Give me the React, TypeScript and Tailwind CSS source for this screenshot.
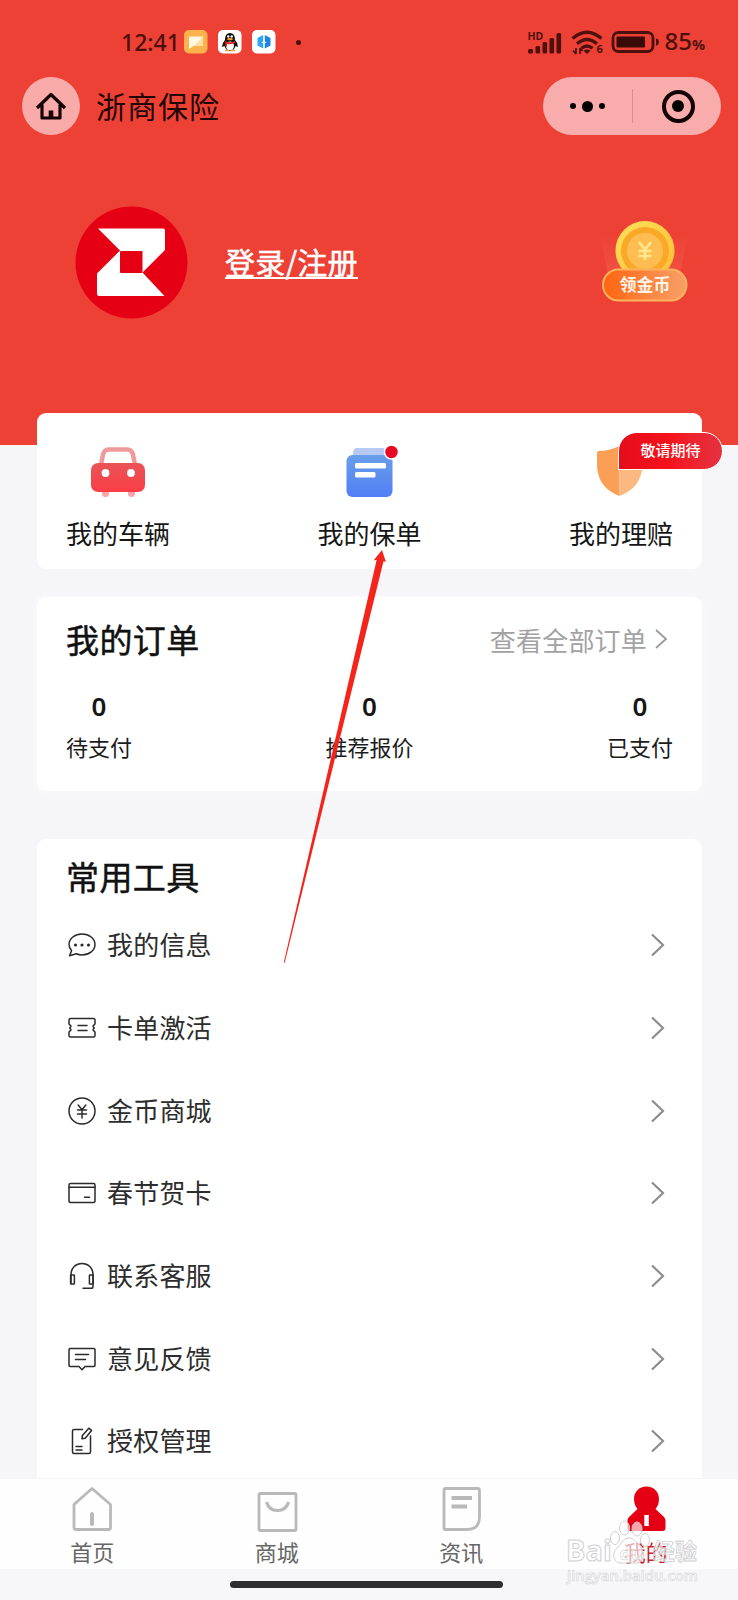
import type { ReactNode } from "react";

const tools = [
  { label: "我的信息", icon: <MessageIcon /> },
  { label: "卡单激活", icon: <TicketIcon /> },
  { label: "金币商城", icon: <CoinIcon /> },
  { label: "春节贺卡", icon: <CardIcon /> },
  { label: "联系客服", icon: <HeadsetIcon /> },
  { label: "意见反馈", icon: <FeedbackIcon /> },
  { label: "授权管理", icon: <AuthIcon /> },
];

const orders = [
  { label: "待支付", count: 0 },
  { label: "推荐报价", count: 0 },
  { label: "已支付", count: 0 },
];

function LineIcon({ children }: { children: ReactNode }) {
  return (
    <svg
      width="30"
      height="30"
      viewBox="0 0 30 30"
      fill="none"
      stroke="#2b2b2b"
      strokeWidth="1.5"
      strokeLinejoin="round"
      strokeLinecap="round"
    >
      {children}
    </svg>
  );
}

function MessageIcon() {
  return (
    <LineIcon>
      <path d="M4.6 20.4C2.8 18.5 2 16.6 2 14.4 2 8.6 7.8 3.9 15 3.9S28 8.6 28 14.4 22.2 25 15 25c-2.200 0-4-.4-5.700-1.200L2.600 25.800Z" />
      <g fill="#2b2b2b" stroke="none">
        <circle cx="8.5" cy="15" r="1.6" />
        <circle cx="15" cy="15" r="1.6" />
        <circle cx="21.5" cy="15" r="1.6" />
      </g>
    </LineIcon>
  );
}

function TicketIcon() {
  return (
    <LineIcon>
      <path d="M3.500 5.500h23q1.500 0 1.500 1.500v3.800c-.4 1.400-2 1.400-2 2.400s1.200 1 1.200 1.800-1.200.8-1.200 1.800 1.600 1 2 2.400V22.500q0 1.500-1.500 1.500h-23Q2 24 2 22.500V19.200c.4-1.400 2-1.400 2-2.400S2.800 15.800 2.800 15 4 14.200 4 13.200s-1.600-1-2-2.400V7q0-1.500 1.500-1.500Z" />
      <path d="M11 12.500h9M11 17.500h9" />
    </LineIcon>
  );
}

function CoinIcon() {
  return (
    <LineIcon>
      <circle cx="15" cy="15" r="13" />
      <path d="M11.200 9l3.800 4.800L18.800 9M15 13.800V22M10.500 14h9M10.500 18h9" />
    </LineIcon>
  );
}

function CardIcon() {
  return (
    <LineIcon>
      <rect x="2" y="5.500" width="26" height="19" rx="1.500" />
      <path d="M2 9.200h26M17.500 19.200h5" />
    </LineIcon>
  );
}

function HeadsetIcon() {
  return (
    <LineIcon>
      <path d="M4 22V13.500C4 7 8.800 2.500 15 2.500S26 7 26 13.500V25.500q0 1.800-1.800 1.800H16" />
      <rect x="3.600" y="14" width="3.800" height="9" rx=".6" />
      <rect x="22.400" y="14" width="3.800" height="9" rx=".6" />
    </LineIcon>
  );
}

function FeedbackIcon() {
  return (
    <LineIcon>
      <path d="M3.200 4.500h23.600q1.200 0 1.200 1.200V21.300q0 1.200-1.200 1.200H18l-3 3.300-3-3.300H3.200Q2 22.500 2 21.300V5.700q0-1.200 1.200-1.200Z" />
      <path d="M8.500 10.500h13M8.500 15.500h10" />
    </LineIcon>
  );
}

function AuthIcon() {
  return (
    <LineIcon>
      <path d="M15.500 3.500H7Q5.500 3.500 5.500 5v21q0 1.500 1.500 1.500h15q1.500 0 1.500-1.500V10" />
      <path d="M21.800 2.200l2.800 2.200-6.400 7.800-3.200.6.400-3.200ZM9 20.500h6M9 24h6" />
    </LineIcon>
  );
}

function Chevron() {
  return (
    <svg width="16" height="26" viewBox="0 0 16 26" fill="none" stroke="#8d8d8f" strokeWidth="2.2">
      <path d="M2 2.500l11 10.500L2 23.500" />
    </svg>
  );
}

function StatusBar() {
  return (
    <div className="flex h-[60px] items-start justify-between pt-[26px] pr-[33px] pl-[121px] text-[#4c100d]">
      <div className="flex h-8 items-center">
        <span className="w-[63px] font-['Noto_Sans'] text-[23px] leading-8 font-medium">12:41</span>
        <svg width="24" height="24" viewBox="0 0 24 24">
          <rect width="23.5" height="23.5" rx="5" fill="#fdb24c" />
          <path d="M5 7.500q0-1 1-1h12q1 0 1 1V15q0 1-1 1H9.500L5 19Z" fill="#fff8e4" />
          <path d="M19 7V15q0 1-1 1H9.500Z" fill="#fde0a8" />
        </svg>
        <svg width="24" height="24" viewBox="0 0 24 24" className="ml-[10px]">
          <rect width="23.5" height="23.5" rx="5" fill="#fff" />
          <path d="M7 10Q7 3 12 3T17 10Q20 13 20 17L17.500 16Q16 21 12 21T6.500 16L4 17Q4 13 7 10Z" fill="#111" />
          <ellipse cx="12" cy="16" rx="4" ry="4.500" fill="#fff" />
          <circle cx="10.300" cy="6.500" r="1.200" fill="#fff" />
          <circle cx="13.700" cy="6.500" r="1.200" fill="#fff" />
          <ellipse cx="12" cy="9.200" rx="3" ry="1.100" fill="#f5a623" />
          <path d="M7 11q5 2.500 10 0v2q-5 2-8 1v2.500H7.500Z" fill="#e8261c" />
          <path d="M7 20.500h4M13 20.500h4" stroke="#f5a623" strokeWidth="1.600" />
        </svg>
        <svg width="24" height="24" viewBox="0 0 24 24" className="ml-[10px]">
          <rect width="23.5" height="23.5" rx="5" fill="#fff" />
          <path d="M11.200 5L5.500 8v7.500l5.700 3v-5.200l-2-.8 2-1Z" fill="#2fa4f2" />
          <path d="M12.800 5l5.700 3v7.500l-5.700 3v-5.200l2-.8-2-1Z" fill="#1d83e4" />
        </svg>
        <span className="ml-[20px] size-[5px] rounded-full bg-[#4c100d]" />
      </div>
      <div className="flex h-8 items-center">
        <div className="relative mr-[8px] h-8 w-[36px]">
          <span className="absolute top-[3px] left-0 font-['Noto_Sans'] text-[10.5px] leading-[14px] font-bold">HD</span>
          <svg width="36" height="28" viewBox="0 0 36 28" className="mt-[4px]" fill="currentColor">
            <rect x="1" y="19" width="5" height="4.5" rx="1.5" />
            <rect x="8.500" y="16" width="4.600" height="7.500" rx="1.500" />
            <rect x="15.500" y="12" width="4.600" height="11.500" rx="1.500" />
            <rect x="22.500" y="8" width="4.600" height="15.500" rx="1.500" />
            <rect x="29.500" y="3" width="4.600" height="20.500" rx="1.500" />
          </svg>
        </div>
        <div className="relative h-8 w-[34px]">
          <svg width="34" height="25" viewBox="0 0 34 25" className="mt-[4px]" fill="none" stroke="currentColor" strokeWidth="3.4">
            <path d="M1.500 8.500q14.500-12.500 29 0M6 13.700q10-8.500 20 0M10.500 18.300q5.500-4.600 11 0" />
            <path d="M16 24l-3.500-3.200q3.500-2.600 7 0Z" fill="currentColor" stroke="none" />
            <path d="M5 18v6M2 20.500L5 24M9 24v-6M11.500 21L9 18" strokeWidth="1.700" />
          </svg>
          <span className="absolute top-[16px] left-[25px] font-['Noto_Sans'] text-[11px] leading-[14px] font-bold">6</span>
        </div>
        <svg width="48" height="22" viewBox="0 0 48 22" className="ml-[6px]">
          <rect x="2" y="1.500" width="40" height="19" rx="5.500" fill="none" stroke="currentColor" strokeWidth="2.800" />
          <rect x="5.500" y="5.500" width="28.500" height="11" rx="1" fill="#380a08" />
          <path d="M45 7.500q2.800 0 2.800 3.500t-2.800 3.500Z" fill="currentColor" />
        </svg>
        <span className="ml-[5px] font-['Noto_Sans'] text-[24px] leading-8 font-medium">
          85<span className="text-[14.5px] font-bold">%</span>
        </span>
      </div>
    </div>
  );
}

function NavBar() {
  return (
    <div className="mt-[17px] flex h-[58px] items-center pr-[17px] pl-[22px]">
      <div className="flex size-[58px] items-center justify-center rounded-full bg-[#f9abaa]">
        <svg width="32" height="32" viewBox="0 0 32 32" fill="none" stroke="#150303" strokeWidth="3.2">
          <path d="M2 18L16 4.500 30 18M7 14.500V28h18V14.500" strokeLinejoin="round" />
          <path d="M16 28.500v-8" strokeWidth="4.600" />
        </svg>
      </div>
      <h1 className="ml-4 text-[30px] leading-[54px] tracking-[1px] text-[#220503] pb-[3px]">浙商保险</h1>
      <div className="ml-auto flex h-[58px] w-[178px] items-center rounded-full bg-[#f8acab]">
        <div className="flex w-[89px] items-center justify-center gap-[6px]">
          <span className="size-[6px] rounded-full bg-black" />
          <span className="size-[11px] rounded-full bg-black" />
          <span className="size-[6px] rounded-full bg-black" />
        </div>
        <span className="h-[34px] w-px bg-[#dd8c8b]" />
        <div className="flex w-[88px] items-center justify-center pl-[2px]">
          <span className="flex size-[33px] items-center justify-center rounded-full border-4 border-[#120202]">
            <span className="size-[12px] rounded-full bg-black" />
          </span>
        </div>
      </div>
    </div>
  );
}

function Profile() {
  return (
    <div className="mt-[71px] flex h-[113px] items-center pr-[48px] pl-[75px]">
      <svg width="113" height="113" viewBox="0 0 113 113">
        <circle cx="56.500" cy="56.500" r="56" fill="#e60013" />
        <path
          d="M23 22.500H88q2 0 2 2V44L67.500 66.500 89.500 90H24q-2 0-2-2V67.500L45 44.500Z"
          fill="#fff"
        />
        <rect x="45" y="45" width="22.500" height="22" rx="1" fill="#e60013" />
      </svg>
      <a className="ml-[37px] pt-[1px] text-[30px] text-white">
        <span className="flex h-[31px] items-center border-b-2 border-white tracking-[0.2px] leading-[28px] pb-[2px] [-webkit-text-stroke:0.5px_white]">
          登录/注册
        </span>
      </a>
      <svg width="90" height="86" viewBox="0 0 90 86" className="ml-auto">
        <defs>
          <linearGradient id="coin" x1="0" y1="0" x2="1" y2="1">
            <stop offset="0" stopColor="#ffe05a" />
            <stop offset="1" stopColor="#f9bd35" />
          </linearGradient>
          <linearGradient id="pill" x1="0" y1="0" x2="1" y2="0">
            <stop offset="0" stopColor="#ff6510" />
            <stop offset="1" stopColor="#f8a068" />
          </linearGradient>
          <linearGradient id="ray" x1="0" y1="0" x2="0" y2="1">
            <stop offset="0" stopColor="#f47058" stopOpacity="0" />
            <stop offset="1" stopColor="#f77d60" stopOpacity=".7" />
          </linearGradient>
        </defs>
        <path d="M0 14L9 60h70l9-46Z" fill="url(#ray)" opacity=".5" />
        <circle cx="45" cy="30.500" r="29.500" fill="url(#coin)" />
        <circle cx="45" cy="31" r="24" fill="#fba728" />
        <circle cx="45" cy="31" r="18" fill="#fdbd50" />
        <path d="M39 22l6 7.500 6-7.500M45 29v11M38.500 31h13M38.500 36h13" fill="none" stroke="#ffe98e" strokeWidth="2.600" />
        <rect x="3" y="49.500" width="83.500" height="31" rx="15.500" fill="url(#pill)" stroke="#fbb35c" strokeWidth="2" />
        <text x="45" y="71" textAnchor="middle" fontSize="17" fontWeight="700" fill="#fff5e8">领金币</text>
      </svg>
    </div>
  );
}

function CarIcon() {
  return (
    <svg width="56" height="52" viewBox="0 0 56 52">
      <defs>
        <linearGradient id="car" x1="0" y1="0" x2="0" y2="1">
          <stop offset="0" stopColor="#e95458" />
          <stop offset="1" stopColor="#fb3d45" />
        </linearGradient>
      </defs>
      <path d="M11 19L13 8.500Q14.500 3.500 18.500 3.500h19q4 0 5.500 5L45 19" fill="none" stroke="#f09a9b" strokeWidth="4.500" />
      <path d="M12 45h7v2.500a3.500 3.500 0 0 1-7 0ZM38 45h7v2.500a3.500 3.500 0 0 1-7 0Z" fill="#fba5a8" />
      <rect x="1" y="17" width="54" height="29" rx="7" fill="url(#car)" />
      <circle cx="15.500" cy="27" r="3.900" fill="#fff" />
      <circle cx="41" cy="27" r="3.900" fill="#fff" />
    </svg>
  );
}

function PolicyIcon() {
  return (
    <svg width="56" height="52" viewBox="0 0 56 52" className="overflow-visible">
      <defs>
        <linearGradient id="policy" x1="0" y1="0" x2="0" y2="1">
          <stop offset="0" stopColor="#699ee8" />
          <stop offset="1" stopColor="#507ff5" />
        </linearGradient>
      </defs>
      <path d="M14.500 2h26q4 0 5 4l2 8H10l1-8q1-4 3.500-4Z" fill="#b7c9f5" />
      <rect x="4.500" y="9" width="46" height="42" rx="6" fill="url(#policy)" />
      <rect x="13" y="17" width="31" height="5.500" rx="1.500" fill="#fff" />
      <rect x="13" y="26" width="20.500" height="5.500" rx="1.500" fill="#fff" />
      <circle cx="49.500" cy="6" r="7" fill="#e60a24" stroke="#fff" strokeWidth="1.500" />
    </svg>
  );
}

function ShieldIcon() {
  return (
    <svg width="56" height="52" viewBox="0 0 56 52">
      <path d="M26.500 0Q16 5 5.500 5Q4 5 4 7V20Q5 42 26.500 50Z" fill="#fa9f55" />
      <path d="M26.500 0Q37 5 49.500 6V20Q48 42 26.500 50Z" fill="#fbb880" />
    </svg>
  );
}

function QuickItem({ label, children }: { label: string; children: ReactNode }) {
  return (
    <div className="relative flex w-[104px] flex-col items-center">
      {children}
      <span className="mt-[15px] text-[26px] leading-[40px] whitespace-nowrap text-[#161616]">{label}</span>
    </div>
  );
}

function QuickCard() {
  return (
    <section className="mr-9 ml-[37px] mt-[94px] flex h-[156px] justify-between rounded-[9px] bg-white px-[29px] pt-[33px]">
      <QuickItem label="我的车辆">
        <CarIcon />
      </QuickItem>
      <QuickItem label="我的保单">
        <PolicyIcon />
      </QuickItem>
      <QuickItem label="我的理赔">
        <ShieldIcon />
        <span className="absolute top-[-14px] left-[49px] flex h-[38px] w-[105px] items-center justify-center rounded-[19px] rounded-bl-none border-[1.5px] border-white bg-linear-to-r from-[#e60c1a] via-[#f5121c] to-[#e5303f] pb-[1px] text-[15px] font-medium text-white">
          敬请期待
        </span>
      </QuickItem>
    </section>
  );
}

function OrderCard() {
  return (
    <section className="mr-9 ml-[37px] mt-[28px] h-[194px] rounded-[9px] bg-white px-[29px] pt-[20px] shadow-[0_0_6px_#fcfbfd]">
      <div className="flex h-[44px] items-center justify-between">
        <h2 className="text-[33px] leading-[44px] tracking-[0.4px] text-[#111] [-webkit-text-stroke:0.5px_#111]">我的订单</h2>
        <span className="flex items-center gap-[7px] pr-[5px] text-[26px] text-[#a2a2a4]">
          <span className="tracking-[0.2px]">查看全部订单</span>
          <svg width="14" height="22" viewBox="0 0 14 22" fill="none" stroke="#9a9a9c" strokeWidth="1.800" className="-mt-[1px]">
            <path d="M2 2l10 9-10 9" />
          </svg>
        </span>
      </div>
      <div className="mt-[27px] flex justify-between">
        {orders.map((order) => (
          <div key={order.label} className="flex flex-col items-center">
            <span className="font-['Noto_Sans'] text-[26px] leading-[36px] font-semibold text-[#161616]">{order.count}</span>
            <span className="mt-[6px] text-[22px] leading-[32px] text-[#1c1c1c]">{order.label}</span>
          </div>
        ))}
      </div>
    </section>
  );
}

function ToolsCard() {
  return (
    <section className="mr-9 ml-[37px] mt-[48px] min-h-0 flex-1 overflow-hidden rounded-t-[9px] bg-white px-[29px] pt-[15px]">
      <h2 className="text-[33px] leading-[44px] tracking-[0.4px] text-[#111] [-webkit-text-stroke:0.5px_#111]">常用工具</h2>
      <ul className="mt-[6px]">
        {tools.map((tool) => (
          <li key={tool.label} className="flex h-[82.7px] items-center pr-[7px] pl-[1px]">
            {tool.icon}
            <span className="ml-[10px] pb-[3px] text-[26px] tracking-[0.2px] text-[#2d2d2d]">{tool.label}</span>
            <span className="ml-auto">
              <Chevron />
            </span>
          </li>
        ))}
      </ul>
    </section>
  );
}

function Tab({ label, active, children }: { label: string; active?: boolean; children: ReactNode }) {
  return (
    <div className="flex flex-1 flex-col items-center">
      <svg width="44" height="50" viewBox="0 0 44 50" fill="none" stroke="#b9b9b9" strokeWidth="2.800" strokeLinejoin="round">
        {children}
      </svg>
      <span className={active ? "mt-[1px] text-[22px] leading-[32px] text-[#c8222c]" : "mt-[1px] text-[22px] leading-[32px] text-[#666]"}>
        {label}
      </span>
    </div>
  );
}

function TabBar() {
  return (
    <nav className="flex h-[91px] shrink-0 border-t border-[#f5f5f6] bg-[#fefefe] pt-[5px]">
      <Tab label="首页">
        <path d="M22 4.500L40.500 20.500V43.500q0 2-2 2H6q-2 0-2-2V20.500Z" />
        <path d="M22 30v10" strokeWidth="4" strokeLinecap="round" />
      </Tab>
      <Tab label="商城">
        <rect x="4" y="9.500" width="37" height="37" rx="1.500" />
        <path d="M11.500 18q2.500 8.500 11 8.500T33.500 18" strokeWidth="3.200" />
      </Tab>
      <Tab label="资讯">
        <path d="M6.500 4.500H38.500q2 0 2 2V33q0 12.500-12.500 12.500H6.500q-1.500 0-1.500-1.500V6Q5 4.500 6.500 4.500Z" />
        <path d="M12.500 14h20.500M12.500 22.500h15.500" strokeWidth="4" />
      </Tab>
      <Tab label="我的" active>
        <g fill="#e60013" stroke="none">
          <path d="M22.500 2.500c7.500 0 12.500 5.500 12.500 12.500 0 4.500-1.500 7.500-3.500 10l8.500 8q1.500 1.500 1.500 3.500V44q0 3-3 3H6.500q-3 0-3-3V36.500q0-2 1.500-3.500l8.500-8C11.500 22.500 10 19.500 10 15 10 8 15 2.500 22.500 2.500Z" />
          <rect x="20.300" y="31" width="4.500" height="11" fill="#fff" />
        </g>
      </Tab>
    </nav>
  );
}

function Watermark() {
  return (
    <div className="absolute top-[1517px] left-[566px] w-[131px] text-white/60">
      <div className="relative flex h-[49px] items-end justify-between">
        <span className="font-['Open_Sans'] text-[29px] leading-[32px] font-bold [-webkit-text-stroke:1px_#d0d0d2]">Bai</span>
        <svg
          width="44"
          height="46"
          viewBox="0 0 44 46"
          className="absolute top-[2px] left-[43px]"
          fill="#ffffff"
          fillOpacity=".65"
          stroke="#d0d0d2"
        >
          <ellipse cx="15.500" cy="9" rx="5" ry="7" />
          <ellipse cx="28" cy="10" rx="5" ry="7" />
          <ellipse cx="6" cy="19" rx="4.500" ry="6.500" />
          <ellipse cx="36" cy="21" rx="4.500" ry="6.500" />
          <path d="M20 19c6 0 8 6 12 10 5 6 2 15-4 15H12C5 44 2 35 8 29c5-5 6-10 12-10Z" />
          <text x="10.500" y="41" fontSize="18" fontWeight="700" fontFamily="Open Sans" strokeWidth=".6">du</text>
        </svg>
        <span className="text-[22px] leading-[34px] font-bold [-webkit-text-stroke:0.8px_#d0d0d2]">经验</span>
      </div>
      <div className="pl-[1px] font-['Open_Sans'] text-[14.8px] leading-[18px] font-semibold [-webkit-text-stroke:0.6px_#d4d4d6]">
        jingyan.baidu.com
      </div>
    </div>
  );
}

export default function App() {
  return (
    <div className="relative flex h-[1600px] w-[738px] flex-col overflow-hidden bg-[#f6f5f8] bg-[linear-gradient(#ee4136_445px,transparent_445px)] font-['Noto_Sans_CJK_SC',sans-serif]">
      <StatusBar />
      <NavBar />
      <Profile />
      <QuickCard />
      <OrderCard />
      <ToolsCard />
      <TabBar />
      <div className="flex h-[31px] shrink-0 justify-center bg-[#f7f6f8] pt-[12px] pr-[5px]">
        <span className="h-[7px] w-[273px] rounded-full bg-[#2e2d2f]" />
      </div>

      <svg width="120" height="430" viewBox="0 0 120 430" className="absolute top-[545px] left-[275px]">
        <path d="M107 5L98.500 15.500l3.200-.8L8.800 417.500l.9.300L108.500 16.200l2.400.8Z" fill="#f5241a" />
      </svg>
      <Watermark />
    </div>
  );
}
